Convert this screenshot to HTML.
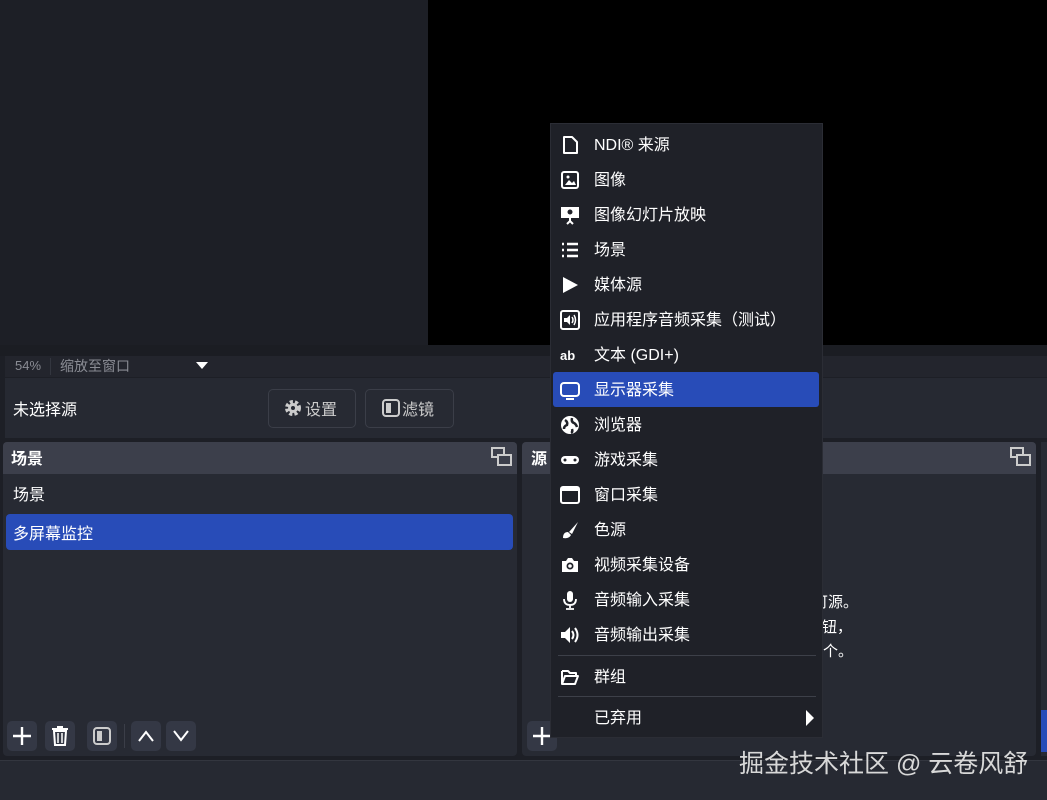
<!DOCTYPE html>
<html><head><meta charset="utf-8"><style>
*{margin:0;padding:0;box-sizing:border-box}
body{width:1047px;height:800px;overflow:hidden;background:#1d1f26;font-family:"Liberation Sans","Noto Sans CJK SC",sans-serif;color:#fff;position:relative}
.a{position:absolute}
.t{font-size:16px;white-space:nowrap}
.mi{position:absolute;left:0;width:273px;height:35px}
.mi svg{position:absolute;left:9px;top:8px}
.mi span{position:absolute;left:43px;top:4px;font-size:16px;color:#fff}
.btn{position:absolute;background:#343845;border-radius:5px;width:30px;height:30px}
</style></head><body>
<div class="a" style="left:0;top:0;width:428px;height:345px;background:#1d1f26"></div>
<div class="a" style="left:428px;top:0;width:619px;height:345px;background:#000"></div>
<div class="a" style="left:0;top:345px;width:1047px;height:11px;background:#1b1d23"></div>
<div class="a" style="left:5px;top:356px;width:1042px;height:21px;background:#23252d"></div>
<div class="a t" style="left:15px;top:358px;font-size:13px;color:#8a8c94">54%</div>
<div class="a" style="left:50px;top:358px;width:1px;height:17px;background:#33363f"></div>
<div class="a t" style="left:60px;top:356px;font-size:14px;color:#8a8c94">缩放至窗口</div>
<svg class="a" style="left:196px;top:362px" width="12" height="8"><path d="M0 0H12L6 7Z" fill="#fff"/></svg>
<div class="a" style="left:5px;top:378px;width:1042px;height:60px;background:#262932"></div>
<div class="a t" style="left:13px;top:396px;">未选择源</div>
<div class="a" style="left:268px;top:389px;width:88px;height:39px;border:1px solid #3b3e48;border-radius:5px;background:#272a33"></div>
<svg class="a" style="left:284px;top:399px" width="18" height="18" viewBox="0 0 18 18"><circle cx="9" cy="9" r="6" fill="none" stroke="#ccc" stroke-width="4" stroke-dasharray="3 2"/><circle cx="9" cy="9" r="5" fill="#ccc"/><circle cx="9" cy="9" r="2" fill="#272a33"/></svg>
<div class="a t" style="left:305px;top:396px;color:#ccc">设置</div>
<div class="a" style="left:365px;top:389px;width:89px;height:39px;border:1px solid #3b3e48;border-radius:5px;background:#272a33"></div>
<svg class="a" style="left:382px;top:399px" width="18" height="18"><rect x="1" y="1" width="16" height="16" rx="3" fill="none" stroke="#ccc" stroke-width="2"/><rect x="4" y="4" width="5" height="10" fill="#ccc"/></svg>
<div class="a t" style="left:402px;top:396px;color:#ccc">滤镜</div>
<div class="a" style="left:3px;top:442px;width:514px;height:314px;background:#272a33;border-radius:4px"></div>
<div class="a" style="left:3px;top:442px;width:514px;height:32px;background:#3c3f4b;border-radius:4px 4px 0 0"></div>
<div class="a t" style="left:11px;top:445px;font-weight:bold">场景</div>
<svg class="a" style="left:491px;top:447px" width="22" height="20"><rect x="1" y="1" width="12" height="9" fill="none" stroke="#ccc" stroke-width="2"/><rect x="7" y="8" width="13" height="10" fill="#3c3f4b" stroke="#ccc" stroke-width="2"/></svg>
<div class="a t" style="left:13px;top:481px">场景</div>
<div class="a" style="left:6px;top:514px;width:507px;height:36px;background:#284cb8;border-radius:4px"></div>
<div class="a t" style="left:13px;top:520px">多屏幕监控</div>
<div class="btn" style="left:7px;top:721px"></div>
<svg class="a" style="left:12px;top:726px" width="20" height="20"><path d="M10 1V19M1 10H19" stroke="#fff" stroke-width="2.4"/></svg>
<div class="btn" style="left:45px;top:721px"></div>
<svg class="a" style="left:51px;top:726px" width="18" height="20"><rect x="1" y="2" width="16" height="2" fill="#fff"/><rect x="6" y="0" width="6" height="2" fill="#fff"/><path d="M3 5H15L14 19H4Z" fill="none" stroke="#fff" stroke-width="2"/><path d="M7 7V17M11 7V17" stroke="#fff" stroke-width="1.5"/></svg>
<div class="btn" style="left:87px;top:721px"></div>
<svg class="a" style="left:93px;top:727px" width="18" height="18"><rect x="1" y="1" width="16" height="16" rx="3" fill="none" stroke="#ccc" stroke-width="2"/><rect x="4" y="4" width="5" height="10" fill="#ccc"/></svg>
<div class="a" style="left:124px;top:724px;width:1px;height:24px;background:#3b3e48"></div>
<div class="btn" style="left:131px;top:721px"></div>
<svg class="a" style="left:138px;top:730px" width="16" height="12"><path d="M1 11L8 2L15 11" fill="none" stroke="#fff" stroke-width="2"/></svg>
<div class="btn" style="left:166px;top:721px"></div>
<svg class="a" style="left:173px;top:730px" width="16" height="12"><path d="M1 1L8 10L15 1" fill="none" stroke="#fff" stroke-width="2"/></svg>
<div class="a" style="left:522px;top:442px;width:514px;height:314px;background:#272a33;border-radius:4px"></div>
<div class="a" style="left:522px;top:442px;width:514px;height:32px;background:#3c3f4b;border-radius:4px 4px 0 0"></div>
<div class="a t" style="left:531px;top:445px;font-weight:bold">源</div>
<svg class="a" style="left:1010px;top:447px" width="22" height="20"><rect x="1" y="1" width="12" height="9" fill="none" stroke="#ccc" stroke-width="2"/><rect x="7" y="8" width="13" height="10" fill="#3c3f4b" stroke="#ccc" stroke-width="2"/></svg>
<div class="a t" style="left:813px;top:591px;font-size:15px">可源。</div>
<div class="a t" style="left:807px;top:616px;font-size:15px">按钮，</div>
<div class="a t" style="left:808px;top:640px;font-size:15px">一个。</div>
<div class="btn" style="left:527px;top:721px"></div>
<svg class="a" style="left:532px;top:726px" width="20" height="20"><path d="M10 1V19M1 10H19" stroke="#fff" stroke-width="2.4"/></svg>
<div class="a" style="left:1041px;top:442px;width:6px;height:314px;background:#272a33"></div>
<div class="a" style="left:1041px;top:710px;width:6px;height:42px;background:#284cb8"></div>
<div class="a" style="left:0;top:760px;width:1047px;height:40px;background:#262932;border-top:1px solid #33363f"></div>
<div class="a t" style="left:739px;top:744px;font-size:25px;color:#d8d8d8">掘金技术社区 @ 云卷风舒</div>
<div class="a" style="left:550px;top:123px;width:273px;height:615px;background:#1f2128;border:1px solid #2b2d35">
 <div class="mi" style="top:3px"><svg width="20" height="20"><path d="M4 2H12L17 7V18H4Z" fill="none" stroke="#fff" stroke-width="2" stroke-linejoin="round"/></svg><span>NDI® 来源</span></div>
 <div class="mi" style="top:38px"><svg width="20" height="20"><rect x="2" y="2" width="16" height="16" rx="2" fill="none" stroke="#fff" stroke-width="2"/><path d="M5 15L9 10L12 13L14 11L16 15Z" fill="#fff"/><circle cx="8" cy="7" r="1.5" fill="#fff"/></svg><span>图像</span></div>
 <div class="mi" style="top:73px"><svg width="20" height="20"><rect x="1" y="2" width="18" height="11" fill="#fff"/><circle cx="10" cy="7" r="2.5" fill="#1f2128"/><path d="M10 13V16M7 19L10 16L13 19" stroke="#fff" stroke-width="2" fill="none"/></svg><span>图像幻灯片放映</span></div>
 <div class="mi" style="top:108px"><svg width="20" height="20"><path d="M2 4H4M2 10H4M2 16H4M7 4H18M7 10H18M7 16H18" stroke="#fff" stroke-width="2.5"/></svg><span>场景</span></div>
 <div class="mi" style="top:143px"><svg width="20" height="20"><path d="M3 2L18 10L3 18Z" fill="#fff"/></svg><span>媒体源</span></div>
 <div class="mi" style="top:178px"><svg width="20" height="20"><rect x="1" y="1" width="18" height="18" rx="2" fill="none" stroke="#fff" stroke-width="2"/><path d="M4 8H7L10 5V15L7 12H4Z" fill="#fff"/><path d="M12 7Q14 10 12 13M14 5Q17 10 14 15" stroke="#fff" stroke-width="1.5" fill="none"/></svg><span>应用程序音频采集（测试）</span></div>
 <div class="mi" style="top:213px"><svg width="20" height="20"><text x="0" y="15" font-size="13" font-weight="bold" fill="#fff" font-family="Liberation Sans">ab</text></svg><span>文本 (GDI+)</span></div>
 <div class="mi" style="top:248px;left:2px;width:266px;background:#284cb8;border-radius:3px"><svg width="20" height="20" style="left:7px"><rect x="1" y="3" width="18" height="13" rx="3" fill="none" stroke="#fff" stroke-width="2"/><path d="M6 19H14" stroke="#fff" stroke-width="2"/></svg><span style="left:41px">显示器采集</span></div>
 <div class="mi" style="top:283px"><svg width="20" height="20"><circle cx="10" cy="10" r="9" fill="#fff"/><path d="M5 5Q8 7 7 10Q4 11 4 14M12 3Q11 7 14 8Q16 9 17 12M12 14Q13 17 11 18" stroke="#1f2128" stroke-width="2.5" fill="none"/></svg><span>浏览器</span></div>
 <div class="mi" style="top:318px"><svg width="20" height="20"><rect x="1" y="6" width="18" height="8" rx="4" fill="#fff"/><circle cx="5" cy="10" r="1.5" fill="#1f2128"/><circle cx="15" cy="10" r="1.5" fill="#1f2128"/></svg><span>游戏采集</span></div>
 <div class="mi" style="top:353px"><svg width="20" height="20"><rect x="1" y="2" width="18" height="16" rx="2" fill="none" stroke="#fff" stroke-width="2"/><rect x="1" y="2" width="18" height="4" fill="#fff"/></svg><span>窗口采集</span></div>
 <div class="mi" style="top:388px"><svg width="20" height="20"><path d="M18 2L9 12L12 14Z" fill="#fff"/><path d="M3 18Q3 12 8 12L11 15Q9 19 3 18Z" fill="#fff"/></svg><span>色源</span></div>
 <div class="mi" style="top:423px"><svg width="20" height="20"><path d="M2 6H6L8 3H12L14 6H18V17H2Z" fill="#fff"/><circle cx="10" cy="11" r="3.5" fill="#1f2128"/><circle cx="10" cy="11" r="1.8" fill="#fff"/></svg><span>视频采集设备</span></div>
 <div class="mi" style="top:458px"><svg width="20" height="20"><rect x="7" y="1" width="6" height="11" rx="3" fill="#fff"/><path d="M4 9Q4 15 10 15Q16 15 16 9M10 15V18M6 19H14" stroke="#fff" stroke-width="1.8" fill="none"/></svg><span>音频输入采集</span></div>
 <div class="mi" style="top:493px"><svg width="20" height="20"><path d="M1 7H5L10 2V18L5 13H1Z" fill="#fff"/><path d="M12 6Q15 10 12 14M15 3Q20 10 15 17" stroke="#fff" stroke-width="2" fill="none"/></svg><span>音频输出采集</span></div>
 <div class="a" style="left:7px;top:531px;width:258px;height:1px;background:#3d4049"></div>
 <div class="mi" style="top:535px"><svg width="20" height="20"><path d="M2 4H8L10 6H16V8M2 4V17H15L18 9H5L2 17" fill="none" stroke="#fff" stroke-width="2" stroke-linejoin="round"/></svg><span>群组</span></div>
 <div class="a" style="left:7px;top:572px;width:258px;height:1px;background:#3d4049"></div>
 <div class="mi" style="top:576px"><span>已弃用</span><svg width="10" height="16" style="left:254px;top:10px"><path d="M1 0L9 8L1 16Z" fill="#fff"/></svg></div>
</div>
</body></html>
